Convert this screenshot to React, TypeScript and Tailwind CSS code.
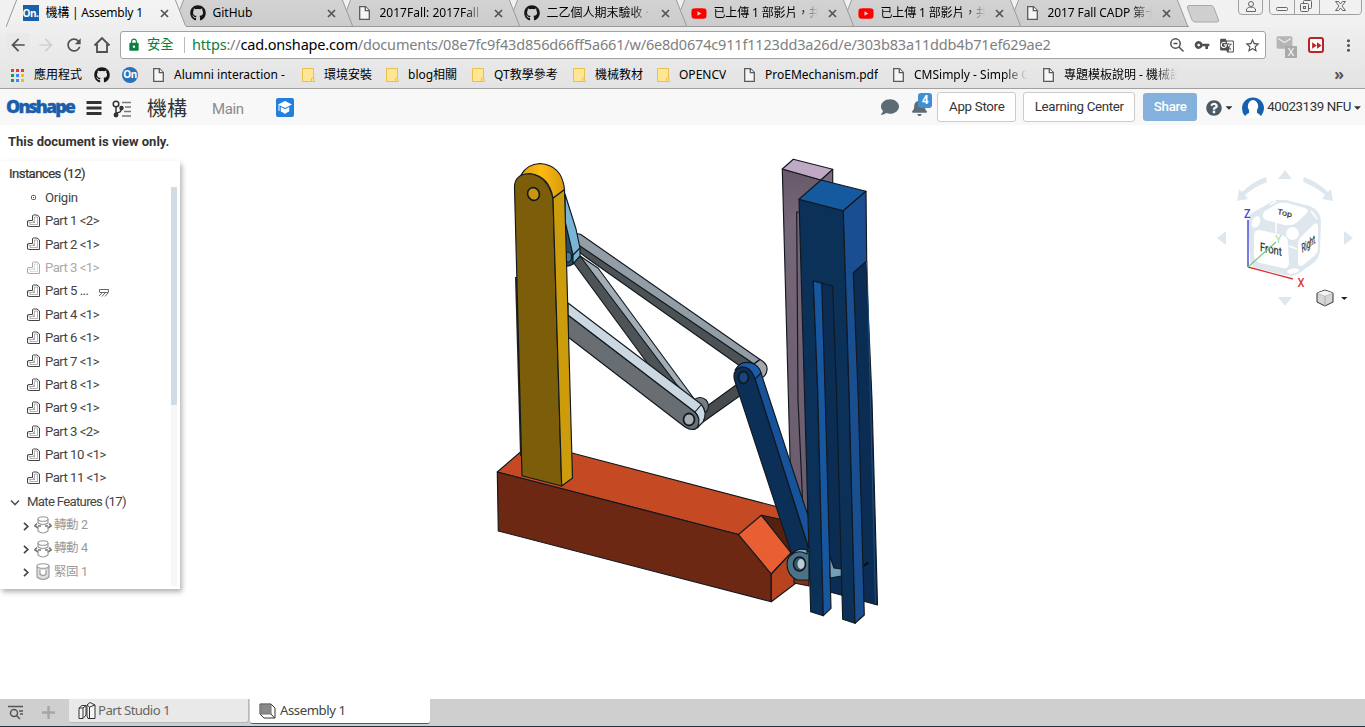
import React from "react";
import { FaGithub, FaYoutube, FaComment, FaBell, FaQuestionCircle, FaCaretDown } from "react-icons/fa";
import { MdLock, MdArrowBack, MdArrowForward, MdRefresh, MdVpnKey, MdStarBorder, MdMoreVert, MdGTranslate, MdFastForward, MdEmail } from "react-icons/md";

const chromeFont = "font-['Noto_Sans','Noto_Sans_CJK_TC',sans-serif]";
const appFont = "font-['Roboto','Noto_Sans_CJK_TC',sans-serif]";

function PageIcon() {
  return (
    <svg className="h-[14px] w-[11px] shrink-0" viewBox="0 0 11 14" fill="#f6f6f6" stroke="#5a5a5a" strokeWidth="1.3">
      <path d="M.7.7H6.5L10.3 4.5V13.3H.7Z" />
      <path d="M6.3.7V4.7H10.3" />
    </svg>
  );
}

function FolderIcon() {
  return (
    <svg className="h-[14px] w-[13px] shrink-0" viewBox="0 0 13 14">
      <path d="M.5.5H11.5V10L12.4 13.5H.5Z" fill="#ffe694" stroke="#e8c04a" />
      <path d="M9.5 13.5V10.5L11.5 9.5" fill="none" stroke="#e8c04a" />
    </svg>
  );
}

function OnIcon() {
  return <div className="h-4 w-4 shrink-0 bg-[#1b5faa] text-center font-['Open_Sans',sans-serif] text-[10px] leading-4 font-bold tracking-[-0.5px] text-white">On.</div>;
}

type TabKind = "on" | "github" | "page" | "youtube";
const tabs: { kind: TabKind; title: string; z: string; track: string }[] = [
  { kind: "on", title: "機構 | Assembly 1", z: "z-[7]", track: "tracking-[-0.22px]" },
  { kind: "github", title: "GitHub", z: "z-[6]", track: "" },
  { kind: "page", title: "2017Fall: 2017Fall", z: "z-[5]", track: "tracking-[0px]" },
  { kind: "github", title: "二乙個人期末驗收 · 歷", z: "z-[4]", track: "" },
  { kind: "youtube", title: "已上傳 1 部影片，共同", z: "z-[3]", track: "tracking-[-0.15px]" },
  { kind: "youtube", title: "已上傳 1 部影片，共同", z: "z-[2]", track: "tracking-[-0.15px]" },
  { kind: "page", title: "2017 Fall CADP 第十八", z: "z-[1]", track: "tracking-[-0.1px]" },
];

function TabIcon({ kind }: { kind: TabKind }) {
  if (kind === "on") return <OnIcon />;
  if (kind === "github") return <FaGithub className="h-4 w-4 shrink-0 text-[#161616]" />;
  if (kind === "youtube") return <FaYoutube className="h-[17px] w-4 shrink-0 text-[#f00]" />;
  return <span className="flex w-4 shrink-0 justify-center"><PageIcon /></span>;
}

function BrowserTabs() {
  return (
    <div className="flex h-[27px] bg-[#f1f1f1] pl-[6px]">
      {tabs.map((t, i) => (
        <div key={i} className={`relative flex h-[27px] w-[167px] shrink-0 ${t.z}`}>
          <svg className="absolute top-0 left-0 h-[27px] w-[181px]" viewBox="0 0 181 27">
            <defs>
              <linearGradient id={`tab${i}`} x1="0" y1="0" x2="0" y2="1">
                <stop offset="0" stopColor={i === 0 ? "#f4f4f4" : "#d3d3d3"} />
                <stop offset="1" stopColor={i === 0 ? "#efefef" : "#cccccc"} />
              </linearGradient>
            </defs>
            <path d="M0 27L11-1H169L180 27Z" fill={`url(#tab${i})`} stroke="#9a9a9a" />
            {i > 0 ? <path d="M0 26.5H181" stroke="#9a9a9a" /> : <path d="M1 26.5H180" stroke="#efefef" />}
          </svg>
          <div className="relative flex h-[26px] items-center pl-[16.500px]">
            <TabIcon kind={t.kind} />
            <span className={`ml-[7px] w-[104px] overflow-hidden text-[12px] leading-[26px] whitespace-nowrap text-black ${t.track} ${i > 1 ? "[mask-image:linear-gradient(90deg,#000_82%,transparent_100%)]" : ""}`}>{t.title}</span>
            <svg className="ml-[10px] h-[9px] w-[9px] shrink-0" viewBox="0 0 9 9"><path d="M1 1L8 8M8 1L1 8" stroke="#555" strokeWidth="1.7" /></svg>
          </div>
        </div>
      ))}
      <svg className="ml-[8px] h-[27px] w-[46px] shrink-0" viewBox="0 0 46 27">
        <path d="M6 5.500H28Q30 5.500 31 8L35.500 20Q36 22 34 22H12Q10 22 9 20L4.500 8Q4 5.500 6 5.500Z" fill="#cfcfcf" stroke="#a9a9a9" />
      </svg>
      <svg className="ml-auto h-[27px] w-[133px] shrink-0" viewBox="1232 0 133 27" fill="none" stroke="#a0a0a0">
        <path d="M1238.500 0V11Q1238.500 14.500 1242 14.500H1259Q1262.500 14.500 1262.500 11V0M1269.500 0V10Q1269.500 14.500 1273 14.500H1358Q1361.500 14.500 1361.500 10V0M1294.500 0V14M1319.500 0V14" />
        <g stroke="#666">
          <circle cx="1251" cy="4" r="2.500" />
          <path d="M1246.500 11.500V9Q1248 7 1251 7Q1254 7 1255.500 9V11.500Z" />
          <rect x="1276.500" y="7.500" width="11" height="3" rx="1" />
          <rect x="1303.500" y=".5" width="8" height="8" rx="1" fill="#f1f1f1" />
          <rect x="1300.500" y="3.500" width="8" height="8" rx="1" fill="#f1f1f1" />
          <rect x="1303.500" y="6.500" width="2" height="2" />
          <path d="M1335.500 1.500H1338.500L1340.500 4L1342.500 1.500H1345.500L1342 6L1345.500 10.500H1342.500L1340.500 8L1338.500 10.500H1335.500L1339 6Z" />
        </g>
      </svg>
    </div>
  );
}

function AddressRow() {
  return (
    <div className="flex h-[36px] items-center pl-[6px]">
      <div className="flex h-6 w-6 items-center justify-center bg-[#e9e9e9]"><MdArrowBack className="h-[20px] w-[20px] text-[#505050]" /></div>
      <MdArrowForward className="ml-[6px] h-[20px] w-[20px] text-[#cfcfcf]" />
      <MdRefresh className="ml-[8px] h-[20px] w-[20px] text-[#505050]" />
      <svg className="ml-[9px] h-[18px] w-[18px]" viewBox="0 0 18 18" fill="none" stroke="#505050" strokeWidth="1.800"><path d="M1.500 9.500L9 2L16.500 9.500M4 8V16H14V8" /></svg>
      <div className="ml-[9px] flex h-[28px] w-[1146px] shrink-0 items-center rounded-[3px] border border-[#a3a3a3] bg-white pl-[6px]">
        <MdLock className="h-[14px] w-[14px] text-[#0b8043]" />
        <span className="ml-[6px] w-[37px] text-[13.3px] text-[#0b8043]">安全</span>
        <span className="h-4 w-px bg-[#bbb]" />
        <span className="ml-[7px] text-[14.5px] tracking-[-0.18px] whitespace-nowrap text-[#808080]"><span className="text-[#0b8043]">https</span>://<span className="text-black">cad.onshape.com</span>/documents/08e7fc9f43d856d66ff5a661/w/6e8d0674c911f1123dd3a26d/e/303b83a11ddb4b71ef629ae2</span>
        <div className="mr-[4px] ml-auto flex items-center gap-[9px] text-[#505050]">
          <svg className="h-4 w-4" viewBox="0 0 16 16" fill="none" stroke="#505050" strokeWidth="1.500"><circle cx="6.500" cy="6.500" r="4.700" /><path d="M10 10L14.500 14.500M4.500 6.500H8.500" /></svg>
          <MdVpnKey className="h-4 w-4" />
          <MdGTranslate className="h-[15px] w-[16px]" />
          <MdStarBorder className="h-[17px] w-[17px]" />
        </div>
      </div>
      <div className="relative ml-[9px] h-[24px] w-[24px] shrink-0">
        <MdEmail className="h-[19px] w-[19px] text-[#b5b5b5]" />
        <span className="absolute right-[2px] bottom-[-1px] h-3 w-3 bg-[#aaa] text-center text-[11px] leading-3 text-white">X</span>
      </div>
      <div className="ml-[9px] flex h-4 w-4 shrink-0 items-center justify-center rounded-[3px] border-2 border-[#bd2325] bg-white"><MdFastForward className="h-[13px] w-[13px] shrink-0 text-[#bd2325]" /></div>
      <MdMoreVert className="ml-[15px] h-[19px] w-[19px] shrink-0 text-[#555]" />
    </div>
  );
}

type Mark = { icon: "page" | "folder"; label: string; w: string; fade?: boolean; lw?: string };
const marks: Mark[] = [
  { icon: "page", label: "Alumni interaction - ", w: "w-[149px]" },
  { icon: "folder", label: "環境安裝", w: "w-[84px]" },
  { icon: "folder", label: "blog相關", w: "w-[86px]" },
  { icon: "folder", label: "QT教學參考", w: "w-[101px]" },
  { icon: "folder", label: "機械教材", w: "w-[84px]" },
  { icon: "folder", label: "OPENCV", w: "w-[87px]" },
  { icon: "page", label: "ProEMechanism.pdf", w: "w-[149px]" },
  { icon: "page", label: "CMSimply - Simple C", w: "w-[150px]", fade: true, lw: "w-[113px]" },
  { icon: "page", label: "專題模板說明 - 機械設", w: "w-[160px]", fade: true, lw: "w-[113px]" },
];
const appDots = ["bg-[#e53935]", "bg-[#e53935]", "bg-[#e53935]", "bg-[#0f9d58]", "bg-[#4285f4]", "bg-[#fbbc05]", "bg-[#0f9d58]", "bg-[#4285f4]", "bg-[#fbbc05]"];

function BookmarkBar() {
  return (
    <div className="flex h-[26px] items-center border-b border-[#a0a0a0] pb-px pl-[11px] text-[12px] text-black">
      <div className="grid grid-cols-[3px_3px_3px] gap-[2px]">{appDots.map((d, i) => <span key={i} className={`h-[3px] w-[3px] ${d}`} />)}</div>
      <span className="ml-[10px] w-[60px] whitespace-nowrap">應用程式</span>
      <FaGithub className="h-4 w-4 text-[#161616]" />
      <div className="ml-[12px] h-4 w-4 rounded-full bg-[#2a72b8] text-center text-[10px] leading-[15px] font-bold tracking-[-0.5px] text-white">On</div>
      <div className="ml-[15px] flex">
        {marks.map((m) => (
          <div key={m.label} className={`flex shrink-0 items-center ${m.w}`}>
            <span className={`shrink-0 ${m.icon === "page" ? "w-[21px]" : "w-[22px]"}`}>{m.icon === "page" ? <PageIcon /> : <FolderIcon />}</span>
            <span className={`overflow-hidden whitespace-nowrap ${m.lw ?? ""} ${m.fade ? "[mask-image:linear-gradient(90deg,#000_80%,transparent_100%)]" : ""}`}>{m.label}</span>
          </div>
        ))}
      </div>
      <span className="mr-[21px] ml-auto pb-[3px] text-[16px] leading-none font-bold text-[#555]">»</span>
    </div>
  );
}

function AppHeader() {
  return (
    <div className={`flex h-[36px] shrink-0 items-center bg-[#f8f8f8] text-[#333] ${appFont}`}>
      <span className="ml-[6px] w-[80px] pb-[3px] font-['Open_Sans',sans-serif] text-[18px] leading-none font-extrabold tracking-[-1.95px] text-[#1b5faa] [-webkit-text-stroke:0.3px_#1b5faa]">Onshape</span>
      <svg className="mt-[2px] h-4 w-4" viewBox="0 0 16 16"><path d="M.5 2.500H15.500M.5 8H15.500M.5 13.500H15.500" stroke="#333" strokeWidth="3" /></svg>
      <svg className="mt-[4px] ml-[10px] h-[18px] w-[20px]" viewBox="0 0 20 18" fill="none" stroke="#333" strokeWidth="1.500">
        <circle cx="4" cy="4" r="2.800" /><path d="M4 7V15M4 13Q9 13 9.500 8.500" /><circle cx="4" cy="15" r="1.700" fill="#333" /><circle cx="9.500" cy="8" r="1.500" fill="#333" />
        <path d="M10 2.500H19M13 7H19M12 11.500H19M10 16H19" stroke="#777" />
      </svg>
      <span className="ml-[15px] w-[65px] pt-[4px] text-[20px] leading-none whitespace-nowrap text-[#333]">機構</span>
      <span className="w-[64px] pt-[5px] text-[15px] tracking-[-0.4px] text-[#8a8a8a]">Main</span>
      <svg className="h-[19px] w-[18px]" viewBox="0 0 18 19"><rect width="18" height="19" rx="2" fill="#217fdf" /><path d="M2 6.500L9 3L16 6.500L9 10Z" fill="#fff" /><path d="M4.800 9L9 11.200L13.200 9V13.500Q11 14 9 16Q7 14 4.800 13.500Z" fill="#fff" /><path d="M3 7V13" stroke="#fff" /></svg>
      <div className="mr-[4px] ml-auto flex items-center text-[13.3px] whitespace-nowrap">
        <FaComment className="h-[18px] w-[18px] text-[#5d6b75]" />
        <div className="relative ml-[12px] w-[26px]">
          <FaBell className="h-[17px] w-[17px] text-[#5d6b75]" />
          <span className="absolute top-[-6px] left-[7px] h-[15px] w-[14px] rounded-[3px] bg-[#3f8fd2] text-center text-[12px] leading-[15px] font-bold text-white">4</span>
        </div>
        <span className="flex h-[30px] w-[79px] items-center justify-center rounded-[3px] border border-[#ccc] bg-white tracking-[-0.3px]">App Store</span>
        <span className="ml-[7px] flex h-[30px] w-[112px] items-center justify-center rounded-[3px] border border-[#ccc] bg-white tracking-[-0.3px]">Learning Center</span>
        <span className="ml-[8px] flex h-[28px] w-[54px] items-center justify-center rounded-[3px] bg-[#83b1dc] font-medium tracking-[-0.3px] text-white">Share</span>
        <FaQuestionCircle className="mt-[2px] ml-[9px] h-4 w-4 text-[#4c5a65]" />
        <FaCaretDown className="ml-[3px] h-[11px] w-[8px]" />
        <svg className="ml-[9px] h-[22px] w-[22px]" viewBox="0 0 22 22"><path d="M3 20A11 11 0 1 1 19 20L15 17.500V14A5 5 0 1 0 7 14V17.500Z" fill="#1660b2" /><path d="M3 22Q4 17 8 17V14A5 5.500 0 1 1 14 14V17Q18 17 19 22Z" fill="#fff" /></svg>
        <span className="ml-[3px] tracking-[-0.4px]">40023139 NFU</span>
        <FaCaretDown className="ml-[3px] h-[11px] w-[7px]" />
      </div>
    </div>
  );
}

function PartIcon() {
  return (
    <svg className="h-[14px] w-[13px]" viewBox="0 0 13 14" fill="none" stroke="currentColor" strokeWidth="1">
      <path d="M5.500 1.500L6.500 1H10L12.500 3V12.500H3L.5 12V7L2 6.500H5.500Z" />
      <path d="M7.500 3V8.500H3V10.500H10.500V3ZM5.500 6.500L7.500 8.500M.5 7.500L3 8.500" opacity=".5" strokeWidth=".8" />
    </svg>
  );
}

function MateIcon({ fastened }: { fastened?: boolean }) {
  return (
    <svg className="h-[18px] w-[18px]" viewBox="0 0 18 18" fill="none" stroke="#999" strokeWidth="1.100">
      {fastened ? (
        <><path d="M3 3V14Q9 19 15 14V3" fill="#ddd" /><ellipse cx="9" cy="3" rx="6" ry="2.300" fill="#fff" /><path d="M6 7V11Q9 14 12 11V7" fill="#fff" /></>
      ) : (
        <><path d="M4 3V7M14 3V7M4 11V15Q9 19 14 15V11M4 7Q9 10 14 7" /><ellipse cx="9" cy="3" rx="5" ry="2.300" /><path d="M3 7.500L.8 9.800L4 12M15 7.500L17.200 9.800L14 12M4 10H7M14 10H11" stroke="#777" strokeWidth="1.700" /></>
      )}
    </svg>
  );
}

const parts = ["Part 1 <2>", "Part 2 <1>", "Part 3 <1>", "Part 5 ...", "Part 4 <1>", "Part 6 <1>", "Part 7 <1>", "Part 8 <1>", "Part 9 <1>", "Part 3 <2>", "Part 10 <1>", "Part 11 <1>"];
const mates = ["轉動 2", "轉動 4", "緊固 1"];

function Sidebar() {
  return (
    <aside className="relative flex h-[428px] w-[180px] bg-white text-[13.2px] tracking-[-0.55px] text-[#444] shadow-[2px_3px_5px_rgba(0,0,0,0.3)]">
      <div className="w-[171px]">
        <div className="flex h-[25px] items-center pl-[9px] tracking-[-0.6px] text-[#333] [-webkit-text-stroke:0.2px_#333]">Instances (12)</div>
        <div className="flex h-[23.4px] items-center">
          <svg className="ml-[31px] h-[5px] w-[5px]" viewBox="0 0 5 5"><rect x=".5" y=".5" width="4" height="4" rx="1" fill="none" stroke="#555" /><path d="M2 2H3V3H2Z" fill="#555" /></svg>
          <span className="ml-[9px] tracking-[-0.3px]">Origin</span>
        </div>
        {parts.map((p, i) => (
          <div key={i} className={`flex h-[23.4px] items-center pl-[27px] ${i === 2 ? "text-[#aaa]" : ""}`}>
            <PartIcon />
            <span className="ml-[5px]">{p}</span>
            {i === 3 && <svg className="mt-[3px] ml-[11px] h-[8px] w-[10px]" viewBox="0 0 10 8" stroke="#666" fill="none"><path d="M.5 3V.5H9.500V3M.5 3.500H9.500M0 7L3 4M3 7.500L6 4M6 7.500L9 4" /></svg>}
          </div>
        ))}
        <div className="flex h-[23.4px] items-center pl-[10px]">
          <svg className="mt-[2px] h-[7px] w-[10px]" viewBox="0 0 10 7"><path d="M1 1.500L5 5.500L9 1.500" fill="none" stroke="#555" strokeWidth="1.600" /></svg>
          <span className="ml-[7px] tracking-[-0.7px]">Mate Features (17)</span>
        </div>
        {mates.map((m, i) => (
          <div key={m} className="flex h-[23.4px] items-center pl-[23px] text-[#999]">
            <svg className="mt-[2px] h-[9px] w-[6px]" viewBox="0 0 6 9"><path d="M1 .8L4.800 4.500L1 8.200" fill="none" stroke="#444" strokeWidth="1.700" /></svg>
            <span className="ml-[5px]"><MateIcon fastened={i === 2} /></span>
            <span className="ml-[2px] text-[12.5px] tracking-[-0.4px]">{m}</span>
          </div>
        ))}
      </div>
      <div className="mt-[26px] mb-[3px] w-[6px] bg-[#f5f7f9]"><div className="h-[218px] rounded-[1px] bg-[#cfdce5]" /></div>
    </aside>
  );
}

function Model() {
  return (
    <svg className="absolute top-0 left-0 h-[574px] w-[1365px]" viewBox="0 125 1365 574" strokeLinejoin="round">
      <defs>
        <linearGradient id="gold" x1="0" x2="1"><stop offset="0" stopColor="#e0a010" /><stop offset=".45" stopColor="#fcba12" /><stop offset="1" stopColor="#d89b0b" /></linearGradient>
        <linearGradient id="mauve" x1="0" x2="0" y1="0" y2="1"><stop offset="0" stopColor="#67586a" /><stop offset=".15" stopColor="#766778" /><stop offset="1" stopColor="#6a5c6d" /></linearGradient>
      </defs>
      <g stroke="#111820" strokeWidth="1.150">
        <path d="M782.300 169L821 180V250L807 520L793 512L790 457Z" fill="url(#mauve)" />
        <path d="M782.300 169L793.300 159.300L832.700 169.300L821 180Z" fill="#c0a9c4" />
        <path d="M832.700 169.300V184L821 180Z" fill="#7d6b80" />
        <path d="M800 212H796.700L798 400L803.500 520" fill="none" />
        <path d="M497.300 472L520.500 452L572 453L777 506.700L792 512L790 551L738.500 534.500Z" fill="#c54a23" />
        <path d="M497.300 472L738.500 534.500L771.300 574V601.700L498.300 531Z" fill="#6d2814" />
        <path d="M761.300 515.300L784 520L800 562L791 553Z" fill="#56200f" />
        <path d="M738.500 534.500L761.300 515.300L791 553L771.300 574Z" fill="#e95f34" />
        <path d="M771.300 574L791 553L796 556V583L771.300 601.700Z" fill="#b7431f" />
        <path d="M794 570L809 574V586L794 583Z" fill="#843017" />
        <path d="M516 277L521 456" stroke="#222" strokeWidth="2" />

        <path d="M573 262L580 256L590 264L677 385L672 389L648 364Z" fill="#4e5356" />
        <path d="M580 256L598 268L695 400V404L677 385Z" fill="#a3adb6" />
        <path d="M580 243L754 364L740 366L587 258L579 252Z" fill="#4d5255" />
        <path d="M575 234Q580 233 583 236L760 359.500L754 364L580 246L575 240Z" fill="#929da6" />
        <path d="M754 364L760 359.500Q768 364 767 370Q766 378 758 379Z" fill="#a2a7aa" />
        <path d="M703 409L736 385L741 395L703 422Z" fill="#484c4f" />
        <circle cx="700" cy="406" r="8.500" fill="#747e84" />
        <path d="M568 315L695 412Q702 420 698 427Q693 432 685 427L568 337Z" fill="#696e73" />
        <path d="M568 303L701 404Q708 412 703 422L697 428Q702 419 695 412L568 315Z" fill="#ccd8e1" />
        <path d="M695 412L701 405" />
        <ellipse cx="689" cy="419.500" rx="5.500" ry="6" fill="#a6adb3" strokeWidth="1.800" />

        <path d="M565 217L573 255V264Q569 267 564 266Z" fill="#2b4d61" />
        <path d="M565 194L576 229L580 248V256L573 264V255L565 221Z" fill="#79b5d5" />
        <path d="M573 255L580 248" /><ellipse cx="568" cy="257" rx="3.500" ry="5" fill="#477b98" />

        <path d="M743 364Q756 360 761 373L810 522V552L755 379Z" fill="#17539b" />
        <path d="M734.500 380Q732 370 741 367Q752 366 755 379L808 547V567L791 552Z" fill="#0c2f57" />
        <path d="M735 370Q741 360 751 363Q759 365 761 373L755 379Q751 366 741 367Z" fill="#1b5dab" />
        <ellipse cx="743.500" cy="377.500" rx="5" ry="6" fill="#17457d" strokeWidth="1.800" />

        <path d="M514.500 188Q514 174 530 173.500Q547 176 553 198L561.700 486L522 475.700Z" fill="#7c5d09" />
        <path d="M553 198L564.500 189.500L572.500 478L561.700 486Z" fill="#cd9c0d" />
        <path d="M521 175Q527 164 540 163.500Q562 165 564.500 189.500L553 198Q549 176 530 173.500Q525 173.500 521 175Z" fill="url(#gold)" />
        <ellipse cx="533.500" cy="194" rx="5.800" ry="6.500" fill="#c99513" strokeWidth="1.600" transform="rotate(-25 533.500 194)" />

        <path d="M813 281L833 286L866 261L872 400L877.500 605L830 592Z" fill="#0b2d54" />
        <path d="M799 199.300L843.300 210.700L849 390L855 623.300L842.700 619.300L836.700 400L832.700 286L813.300 281L817.700 390L823.300 615.700L810.700 611.700Z" fill="#0c3158" />
        <path d="M799 199.300L821 180L866 191.300L843.300 210.700Z" fill="#155a9f" />
        <path d="M813.300 281L821.700 283.300L825 390L831 608.300L823.300 615.700L817.700 390Z" fill="#17579f" />
        <path d="M843.300 210.700L866 191.300L866.700 261L853.300 272.700L858.300 400L864.300 615L855 623.300L849 390Z" fill="#194f90" />
        <path d="M875.500 603L867 261" stroke="#194f80" strokeWidth="1" />

        <path d="M791 555Q796 548 806 550L809 552V580H797Q787 575 787 564Q787 558 791 555Z" fill="#4b7388" />
        <path d="M791 555Q797 547 807 550V554Q798 549 791 555Z" fill="#7eafc8" />
        <ellipse cx="799.500" cy="564" rx="6" ry="7" fill="#34576a" strokeWidth="1.600" /><ellipse cx="801" cy="564" rx="3.500" ry="5" fill="#bccbd1" stroke="none" />
        <path d="M829.800 556L834 568L841.300 569V576L830.200 578Z" fill="#73a0b8" />
        <path d="M863.500 566L868.500 562.500" stroke="#050b13" strokeWidth="2" />
      </g>
    </svg>
  );
}

function ViewCube() {
  return (
    <svg className="absolute top-[35px] right-0 h-[160px] w-[165px]" viewBox="0 0 165 160" fontFamily="Roboto, sans-serif">
      <g fill="#dfe7ee">
        <path d="M85 10L92 19H78ZM85 146L78 137H92ZM17 78L26 71V85ZM153 78L144 71V85Z" />
        <path d="M37 41L39 29L42 32Q52 22 66 17L67 22Q54 27 45 35L48 39Z" />
        <path d="M133 41L131 29L128 32Q118 22 104 17L103 22Q116 27 125 35L122 39Z" />
        <path d="M52 53L73 41Q78 39 86 40L110 46Q121 51 121 61L120 91Q119 99 112 104L98 114Q93 117 84 115L56 108Q50 106 50 98L48 64Q48 56 52 53Z" />
      </g>
      <g fill="#fff">
        <path d="M65 51L77 44Q81 42 87 43L105 48Q110 50 106 54L96 63Q92 66 84 65L66 60Q60 57 65 51Z" />
        <path d="M60 70L82 75Q88 77 88 83L89 103Q89 109 83 108L60 103Q54 101 54 95V76Q54 69 60 70Z" />
        <path d="M101 77L113 65Q118 61 118 68V88Q118 93 113 97L103 105Q98 108 98 102V85Q98 80 101 77Z" />
        <circle cx="92.500" cy="73.500" r="6.500" /><ellipse cx="56" cy="62" rx="4" ry="6" transform="rotate(25 56 62)" /><ellipse cx="93" cy="111" rx="6" ry="2.500" transform="rotate(-10 93 111)" />
      </g>
      <path d="M76 56V73M89 86L97 89M70 45L76 41M111 51L117 59" stroke="#fff" strokeWidth="1.500" />
      <g fill="#333" stroke="#333" strokeWidth=".2" fontSize="10.500">
        <text transform="matrix(.88 .2 -.1 .75 77 54)" fontSize="10">Top</text>
        <text transform="matrix(.9 .2 0 1.150 60 91)">Front</text>
        <text transform="matrix(.56 -.42 .1 1.150 102 93)">Right</text>
      </g>
      <path d="M48 107V60" stroke="#3434d8" strokeWidth="1.300" /><path d="M48 107L93 119" stroke="#d33" strokeWidth="1.300" /><path d="M48 107L76 82" stroke="#71cb71" strokeWidth="1.200" />
      <text x="44" y="57.500" fontSize="12" fontWeight="500" fill="#4545e0" textLength="6.500" lengthAdjust="spacingAndGlyphs">Z</text><text x="75" y="83" fontSize="11" fill="#a3dda6">Y</text><text x="97.500" y="127" fontSize="12" fontWeight="500" fill="#df3838" textLength="7" lengthAdjust="spacingAndGlyphs">X</text>
      <path d="M117 133L125 130L133 133V142L125 146L117 142Z" fill="#d6d6d6" stroke="#333" /><path d="M117 133L125 136L133 133M125 136V146" fill="none" stroke="#aaa" /><path d="M117.500 133L125 130.500L132.500 133L125 136Z" fill="#f3f3f3" />
      <path d="M141 137H147.500L144.250 140Z" fill="#222" />
    </svg>
  );
}

function BottomTabs() {
  return (
    <div className="flex h-[28px] shrink-0 border-b border-[#25313c] bg-[#cfcfcf] text-[13.2px] tracking-[-0.6px]">
      <svg className="mt-[6px] ml-[8px] h-[15px] w-[16px]" viewBox="0 0 16 15" fill="none" stroke="#555" strokeWidth="1.500"><path d="M0 1.500H15M11 6H15M12 9H15" /><circle cx="6" cy="8" r="3.500" /><path d="M8.500 10.500L12 14" /></svg>
      <svg className="mt-[7px] ml-[18px] h-[13px] w-[13px]" viewBox="0 0 13 13"><path d="M6.500 0V13M0 6.500H13" stroke="#a6a6a6" strokeWidth="2.400" /></svg>
      <div className="ml-[14px] flex h-[24px] w-[180px] items-center rounded-b-[3px] border-r border-b border-[#b9b9b9] bg-[#e9e9e9] pl-[9px] text-[#666]">
        <svg className="h-[17px] w-[18px]" viewBox="0 0 18 17" fill="#f4f4f4" stroke="#333"><path d="M1 6L4 3.500H8V13L5 16.500H1Z" /><path d="M1 6H5V16M5 6L8 3.500" fill="none" /><path d="M9 3L12 .5L17 3V16.500H10L9 14Z" /><path d="M9 3L11.500 5V16M11.500 5L17 3" fill="none" /></svg>
        <span className="ml-[2px]">Part Studio 1</span>
      </div>
      <div className="ml-px flex h-[25px] w-[180px] items-center rounded-b-[3px] border-b border-[#2263aa] bg-white pb-px pl-[9px] text-[#444]">
        <svg className="h-[16px] w-[17px]" viewBox="0 0 17 16" fill="#fff" stroke="#333"><path d="M1 1H12L16 5V15H5L1 11Z" /><path d="M3 1.500H12V11H2V2Z" fill="#8a8a8a" stroke="#777" /><path d="M12 11L15.500 15" /></svg>
        <span className="ml-[4px] tracking-[-0.45px]">Assembly 1</span>
      </div>
    </div>
  );
}

export default function App() {
  return (
    <div className="flex h-[727px] w-[1365px] flex-col overflow-hidden bg-white">
      <header className={`shrink-0 bg-[#e9e9e9] ${chromeFont}`}>
        <BrowserTabs />
        <div className="bg-linear-to-b from-[#efefef] to-[#e3e3e3]">
          <AddressRow />
          <BookmarkBar />
        </div>
      </header>
      <AppHeader />
      <main className={`relative h-[574px] shrink-0 ${appFont}`}>
        <Model />
        <ViewCube />
        <div className="flex h-[36px] items-center pb-[2px] pl-[8px] text-[13px] font-bold text-[#333]">This document is view only.</div>
        <Sidebar />
      </main>
      <BottomTabs />
    </div>
  );
}
